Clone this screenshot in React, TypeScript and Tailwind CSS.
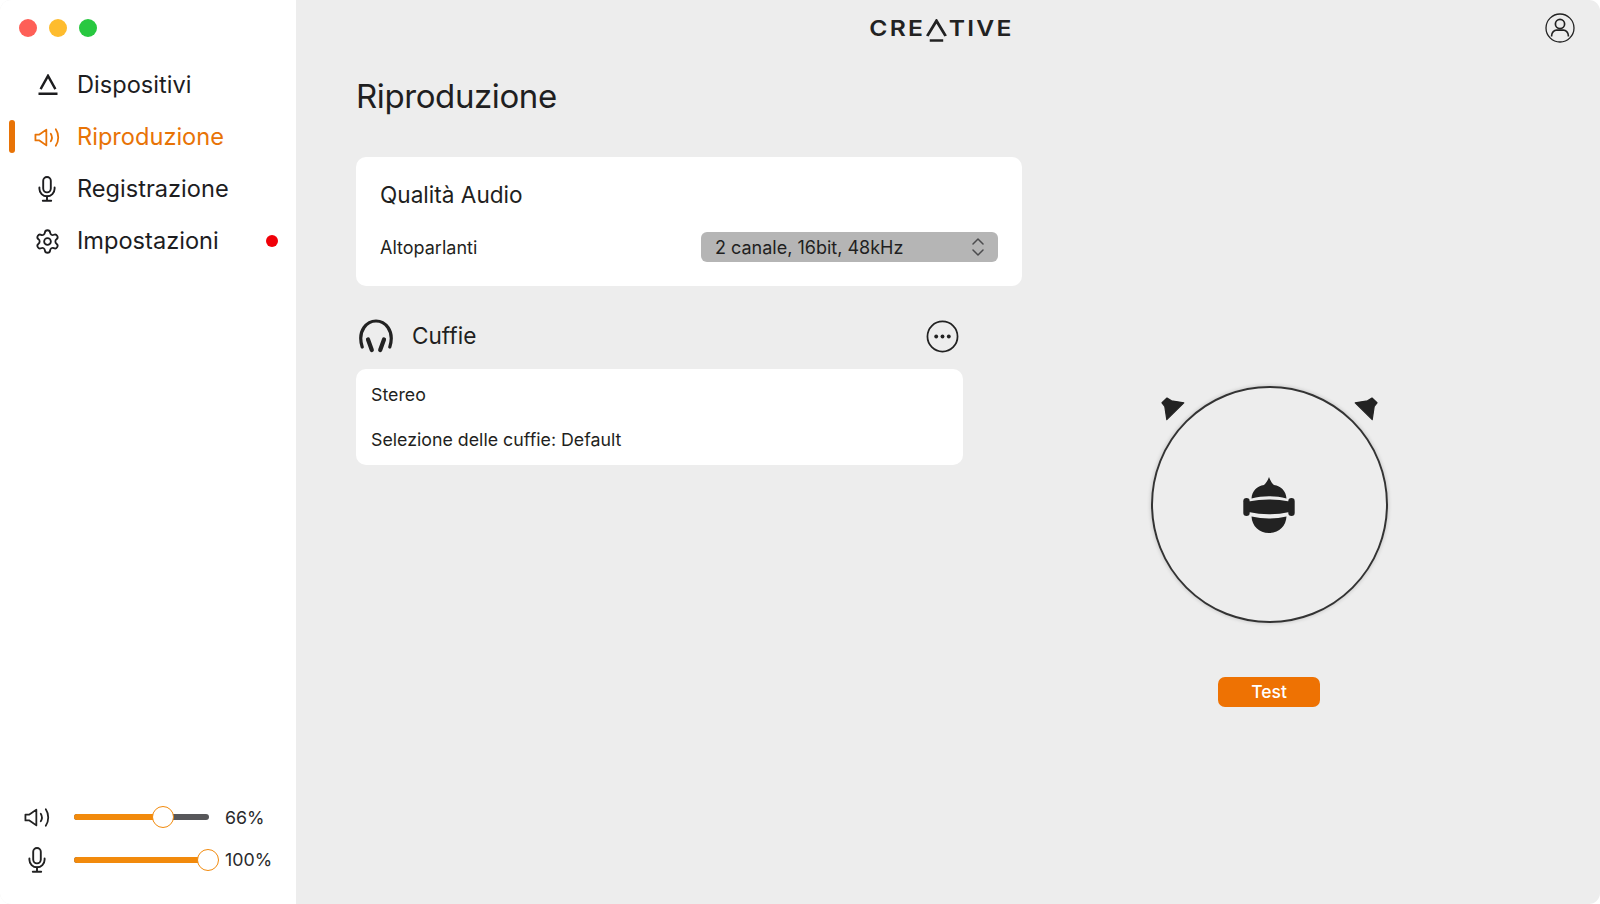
import React from "react";
import { Settings } from "lucide-react";

const font = { fontFamily: "Inter, 'Liberation Sans', sans-serif" };

function Speaker({ className }: { className?: string }) {
  return (
    <svg viewBox="0 0 25 20" fill="none" stroke="currentColor" strokeWidth="1.700" strokeLinejoin="round" strokeLinecap="round" className={className}>
      <path d="M1 7.200v5.600h3.800l6.600 4.700V2.500L4.800 7.200z" />
      <path d="M15.600 6.400c1.400 2.200 1.400 5 0 7.200" />
      <path d="M20.400 2.200c3.100 4.600 3.100 11 0 15.600" />
    </svg>
  );
}

function Mic({ className }: { className?: string }) {
  return (
    <svg viewBox="0 0 18 26" fill="none" stroke="currentColor" strokeWidth="1.900" strokeLinecap="round" className={className}>
      <rect x="5.200" y="1" width="7.600" height="15.400" rx="3.800" />
      <path d="M1.400 11.500v1.200a7.600 7.600 0 0 0 15.200 0v-1.200" />
      <path d="M9 20.400v3.800M4.800 24.800h8.400" />
    </svg>
  );
}

function AMark({ className }: { className?: string }) {
  return (
    <svg viewBox="0 0 20 22" fill="none" stroke="currentColor" className={className}>
      <path d="M2.600 15.200 10 1.800l7.400 13.400" strokeWidth="2.400" />
      <path d="M0.500 19.800h19" strokeWidth="2.600" />
    </svg>
  );
}

function NavItem({ icon, label, active, dot }: { icon: React.ReactNode; label: string; active?: boolean; dot?: boolean }) {
  return (
    <div className={`relative flex h-[52px] items-center pl-[34px] pr-[18px] ${active ? "text-[#e87306]" : "text-[#1d1d1f]"}`}>
      {active && <span className="absolute left-[9px] top-[9px] h-[33px] w-[6px] rounded-full bg-[#e87306]" />}
      <span className="flex w-[43px] shrink-0 items-center">{icon}</span>
      <span className="text-[23.600px] leading-none">{label}</span>
      {dot && <span className="ml-auto h-[12px] w-[12px] rounded-full bg-[#f00008]" />}
    </div>
  );
}

function Slider({ value, thumb, label }: { value: number; thumb: number; label: string }) {
  return (
    <div className="flex items-center">
      <div className="relative h-[6px] w-[135px] rounded-full bg-[#57575a]">
        <div className="h-full rounded-full bg-[#f28a0c]" style={{ width: `${value}%` }} />
        <span
          className="absolute top-1/2 h-[22px] w-[22px] -translate-x-1/2 -translate-y-1/2 rounded-full border-[1.5px] border-[#f28a0c] bg-white"
          style={{ left: thumb }}
        />
      </div>
      <span className="ml-[16px] text-[17.800px] leading-none text-[#2a2a2c]">{label}</span>
    </div>
  );
}

function HeadIcon() {
  return (
    <svg viewBox="0 0 52 56" className="h-[56px] w-[52px]" fill="#222">
      <path d="M26 0C27.500 4 29 6 31 8 38 9 43 14 43.500 21.500 32 18.500 20 18.500 8.500 21.500 9 14 14 9 21 8 23 6 24.500 4 26 0z" />
      <path d="M5.500 24.500Q26 20.500 46.500 24.500V35Q26 39.500 5.500 35z" />
      <rect x="0.300" y="21" width="6.400" height="18" rx="3.200" />
      <rect x="45.300" y="21" width="6.400" height="18" rx="3.200" />
      <path d="M8.500 39.500Q26 43.500 43.500 39.500C43 49 36 56 26 56S9 49 8.500 39.500z" />
    </svg>
  );
}

function SpeakerMark({ className }: { className?: string }) {
  return (
    <svg viewBox="0 0 24 24" className={`absolute h-[24px] w-[24px] ${className ?? ""}`}>
      <path
        fill="#222"
        stroke="#222"
        strokeWidth="1.200"
        strokeLinejoin="round"
        d="M6 1 1 5.800 3.800 9.500 5.800 22.600 22.800 5.800 10.500 3.800z"
      />
    </svg>
  );
}

export default function App() {
  return (
    <div className="bg-white">
      <div style={font} className="flex h-[904px] w-[1600px] overflow-hidden rounded-[11px] bg-[#ededed] text-[#1f1f21]">
        <aside className="flex h-full w-[296px] shrink-0 flex-col bg-white">
          <div className="flex gap-[12px] pl-[19px] pt-[19px]">
            <span className="h-[18px] w-[18px] rounded-full bg-[#fe5f57]" />
            <span className="h-[18px] w-[18px] rounded-full bg-[#febc2e]" />
            <span className="h-[18px] w-[18px] rounded-full bg-[#28c840]" />
          </div>
          <nav className="mt-[22px] flex flex-col">
            <NavItem icon={<AMark className="ml-[4px] h-[22px] w-[20px]" />} label="Dispositivi" />
            <NavItem active icon={<Speaker className="h-[21px] w-[27px]" />} label="Riproduzione" />
            <NavItem icon={<Mic className="ml-[4px] h-[26px] w-[18px]" />} label="Registrazione" />
            <NavItem dot icon={<Settings className="h-[27px] w-[27px]" strokeWidth={1.600} />} label="Impostazioni" />
          </nav>
          <div className="mt-auto flex flex-col gap-[19px] pb-[31px] pl-[24px]">
            <div className="flex items-center gap-[23px]">
              <Speaker className="h-[21px] w-[27px] text-[#222]" />
              <Slider value={66} thumb={89} label="66%" />
            </div>
            <div className="flex items-center gap-[24px]">
              <span className="flex w-[26px] justify-center">
                <Mic className="h-[26px] w-[18px] text-[#222]" />
              </span>
              <Slider value={100} thumb={134} label="100%" />
            </div>
          </div>
        </aside>

        <main className="flex min-w-0 flex-1 flex-col">
          <header className="relative flex h-[56px] shrink-0 items-center justify-center">
            <div
              className="ml-[-14px] flex scale-x-[1.12] items-center text-[22px] font-semibold leading-none tracking-[2px] text-[#222]"
              aria-label="CREATIVE"
            >
              <span>CRE</span>
              <svg viewBox="0 0 20 23" className="mt-[4px] h-[23px] w-[20px] shrink-0" fill="none" stroke="#222">
                <path d="M1.800 17 10 1.800 18.200 17" strokeWidth="2.600" />
                <path d="M4 21.500h12" strokeWidth="2.400" />
              </svg>
              <span className="ml-[1px]">TIVE</span>
            </div>
            <svg viewBox="0 0 30 30" className="absolute right-[25px] top-[13px] h-[30px] w-[30px]" fill="none" stroke="#222" strokeWidth="1.300">
              <circle cx="15" cy="15" r="14" />
              <circle cx="15" cy="11" r="4.600" strokeWidth="1.700" />
              <path d="M6.500 23.500c0-4.500 3-6.300 5-6.300h7c2 0 5 1.800 5 6.300" strokeWidth="1.700" />
            </svg>
          </header>

          <div className="flex flex-1">
            <section className="box-content w-[666px] shrink-0 pl-[60px]">
              <h1 className="mt-[20px] text-[33px] font-normal leading-[40px] tracking-[-0.4px]">Riproduzione</h1>
              <div className="mt-[41px] h-[129px] rounded-[10px] bg-white px-[24px] pt-[24px]">
                <h2 className="text-[22.600px] font-normal leading-[28px]">Qualità Audio</h2>
                <div className="mt-[23px] flex h-[30px] items-center justify-between">
                  <span className="text-[18px]">Altoparlanti</span>
                  <div className="flex h-[30px] w-[297px] items-center justify-between rounded-[6px] bg-[#b5b5b5] pl-[14px] pr-[13px]">
                    <span className="text-[18px] text-[#1f1f21]">2 canale, 16bit, 48kHz</span>
                    <svg viewBox="0 0 14 22" className="h-[22px] w-[14px]" fill="none" stroke="#4c4c4e" strokeWidth="1.500" strokeLinecap="round" strokeLinejoin="round">
                      <path d="M2 8l5-5 5 5M2 14l5 5 5-5" />
                    </svg>
                  </div>
                </div>
              </div>
              <div className="mt-[17px] flex h-[66px] w-[607px] items-center justify-between">
                <div className="flex items-center">
                  <svg viewBox="0 0 34 34" className="ml-[3px] h-[34px] w-[34px]" fill="none" stroke="#222" strokeLinecap="round">
                    <path d="M3.200 28C1 21 1.500 13.500 5 8.500 8 4.300 12.500 2 17 2s9 2.300 12 6.500c3.500 5 4 12.500 1.800 19.500" strokeWidth="3.200" />
                    <path d="M9 20.500l3.800 10.500M25 20.500l-3.800 10.500" strokeWidth="4.200" />
                  </svg>
                  <span className="ml-[19px] text-[22.600px] leading-none">Cuffie</span>
                </div>
                <svg viewBox="0 0 34 34" className="mr-[4px] h-[33px] w-[33px]" fill="none" stroke="#222" strokeWidth="1.800">
                  <circle cx="17" cy="17" r="15.500" />
                  <circle cx="10.500" cy="17" r="2" fill="#222" stroke="none" />
                  <circle cx="17" cy="17" r="2" fill="#222" stroke="none" />
                  <circle cx="23.500" cy="17" r="2" fill="#222" stroke="none" />
                </svg>
              </div>
              <div className="h-[96px] w-[607px] rounded-[10px] bg-white px-[15px] pt-[16px] text-[17.800px] leading-[20px]">
                <p>Stereo</p>
                <p className="mt-[25px]">Selezione delle cuffie: Default</p>
              </div>
            </section>

            <section className="flex flex-1 flex-col items-center pr-[84px] pt-[330px]">
              <div className="relative flex h-[237px] w-[237px] shrink-0 items-center justify-center rounded-full border-2 border-[#333] shadow-[0_0_4px_rgba(0,0,0,0.2)]">
                <SpeakerMark className="left-[8px] top-[9px]" />
                <SpeakerMark className="right-[8px] top-[9px] -scale-x-100" />
                <HeadIcon />
              </div>
              <button className="mt-[54px] h-[30px] w-[102px] rounded-[7px] bg-[#ee7203] text-[17.500px] font-medium text-white">Test</button>
            </section>
          </div>
        </main>
      </div>
    </div>
  );
}
